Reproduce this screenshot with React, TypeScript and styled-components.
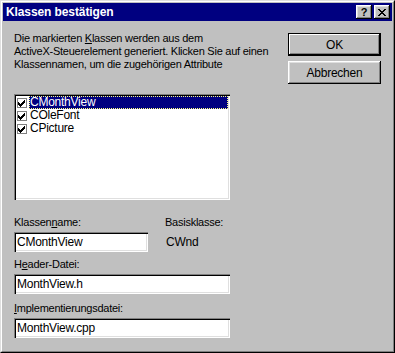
import React from "react";
import styled, { createGlobalStyle } from "styled-components";

const Global = createGlobalStyle`
  html, body { margin: 0; padding: 0; background: #c0c0c0; }
  body { font-family: "Liberation Sans", Arial, sans-serif; font-size: 11px; color: #000; letter-spacing: -0.25px; }
`;

const Window = styled.div`
  width: 395px;
  height: 353px;
  box-sizing: border-box;
  background: #c0c0c0;
  border-style: solid;
  border-width: 1px;
  border-color: #dfdfdf #000 #000 #dfdfdf;
  display: flex;
`;

const WindowInner = styled.div`
  flex: 1;
  display: flex;
  flex-direction: column;
  border-style: solid;
  border-width: 1px;
  border-color: #fff #808080 #808080 #fff;
  padding: 1px;
`;

const TitleBar = styled.div`
  height: 18px;
  background: #000080;
  display: flex;
  align-items: center;
  padding: 0 2px 0 3px;
`;

const Title = styled.span`
  flex: 1;
  color: #fff;
  font-weight: bold;
  font-size: 12px;
  line-height: 18px;
  letter-spacing: -0.1px;
`;

const CaptionButton = styled.div<{ $gap?: boolean }>`
  width: 16px;
  height: 14px;
  box-sizing: border-box;
  background: #c0c0c0;
  box-shadow: inset -1px -1px #000, inset 1px 1px #fff, inset -2px -2px #808080, inset 2px 2px #dfdfdf;
  display: flex;
  align-items: center;
  justify-content: center;
  margin-left: ${(p) => (p.$gap ? "2px" : "0")};
  font-weight: bold;
  font-size: 11px;
  line-height: 11px;
`;

const Body = styled.div`
  flex: 1;
  display: flex;
  justify-content: space-between;
  padding: 11px 11px 0 11px;
`;

const LeftColumn = styled.div`
  width: 216px;
  display: flex;
  flex-direction: column;
`;

const RightColumn = styled.div`
  width: 93px;
  display: flex;
  flex-direction: column;
  gap: 5px;
  padding-top: 1px;
`;

const Description = styled.p`
  margin: 0;
  line-height: 13px;
  white-space: nowrap;
`;

const ListBox = styled.div`
  margin-top: 23px;
  height: 106px;
  box-sizing: border-box;
  padding: 2px;
  background: #fff;
  box-shadow: inset 1px 1px #808080, inset 2px 2px #000, inset -1px -1px #fff, inset -2px -2px #dfdfdf;
  display: flex;
  flex-direction: column;
`;

const ListItem = styled.div`
  height: 13px;
  display: flex;
  align-items: center;
  padding-left: 1px;
`;

const CheckBox = styled.span`
  width: 10px;
  height: 10px;
  box-sizing: border-box;
  border: 1px solid #808080;
  background: #fff;
  display: flex;
  align-items: center;
  justify-content: center;
  flex: none;
`;

const ItemLabel = styled.span<{ $selected?: boolean }>`
  flex: 1;
  margin-left: 2px;
  height: 13px;
  line-height: 13px;
  padding-left: 1px;
  box-sizing: border-box;
  font-size: 12px;
  background: ${(p) => (p.$selected ? "#000080" : "transparent")};
  color: ${(p) => (p.$selected ? "#fff" : "#000")};
  outline: ${(p) => (p.$selected ? "1px dotted #ffff80" : "none")};
  outline-offset: -1px;
`;

const FieldsRow = styled.div`
  display: flex;
  margin-top: 16px;
`;

const FieldColumn = styled.div<{ $width?: number }>`
  display: flex;
  flex-direction: column;
  width: ${(p) => (p.$width ? `${p.$width}px` : "auto")};
`;

const Label = styled.div<{ $top?: number }>`
  line-height: 13px;
  margin-top: ${(p) => p.$top ?? 0}px;
  margin-bottom: 3px;
`;

const Edit = styled.div<{ $width?: number }>`
  height: 20px;
  width: ${(p) => (p.$width ? `${p.$width}px` : "100%")};
  box-sizing: border-box;
  background: #fff;
  box-shadow: inset 1px 1px #808080, inset 2px 2px #000, inset -1px -1px #fff, inset -2px -2px #dfdfdf;
  padding: 0 3px;
  line-height: 20px;
  font-size: 12px;
`;

const StaticValue = styled.div`
  line-height: 20px;
  padding-left: 1px;
  font-size: 12px;
`;

const Button = styled.div<{ $default?: boolean }>`
  height: 23px;
  box-sizing: border-box;
  background: #c0c0c0;
  display: flex;
  align-items: center;
  justify-content: center;
  font-size: 12px;
  box-shadow: ${(p) =>
    p.$default
      ? "inset 0 0 0 1px #000, inset -2px -2px #000, inset 2px 2px #fff, inset -3px -3px #808080"
      : "inset -1px -1px #000, inset 1px 1px #fff, inset -2px -2px #808080, inset 2px 2px #dfdfdf"};
`;

const Check = () => (
  <svg width="8" height="8" viewBox="0 0 8 8" shapeRendering="crispEdges">
    <path d="M0 3h1v1h1v1h1v-1h1v-1h1v-1h1v-1h1v3h-1v1h-1v1h-1v1h-1v1h-1v-1h-1v-1h-1z" fill="#000" />
  </svg>
);

const CloseGlyph = () => (
  <svg width="8" height="7" viewBox="0 0 8 7" shapeRendering="crispEdges">
    <path
      d="M0 0h2v1h1v1h2v-1h1v-1h2v1h-1v1h-1v1h-1v1h1v1h1v1h1v1h-2v-1h-1v-1h-2v1h-1v1h-2v-1h1v-1h1v-1h1v-1h-1v-1h-1v-1h-1z"
      fill="#000"
    />
  </svg>
);

const items = [
  { name: "CMonthView", selected: true },
  { name: "COleFont" },
  { name: "CPicture" },
];

export default function App() {
  return (
    <>
      <Global />
      <Window>
        <WindowInner>
          <TitleBar>
            <Title>Klassen bestätigen</Title>
            <CaptionButton>?</CaptionButton>
            <CaptionButton $gap>
              <CloseGlyph />
            </CaptionButton>
          </TitleBar>
          <Body>
            <LeftColumn>
              <Description>
                Die markierten <u>K</u>lassen werden aus dem
                <br />
                ActiveX-Steuerelement generiert. Klicken Sie auf einen
                <br />
                Klassennamen, um die zugehörigen Attribute
              </Description>
              <ListBox>
                {items.map((it) => (
                  <ListItem key={it.name}>
                    <CheckBox>
                      <Check />
                    </CheckBox>
                    <ItemLabel $selected={it.selected}>{it.name}</ItemLabel>
                  </ListItem>
                ))}
              </ListBox>
              <FieldsRow>
                <FieldColumn $width={151}>
                  <Label>
                    Klassen<u>n</u>ame:
                  </Label>
                  <Edit $width={134}>CMonthView</Edit>
                </FieldColumn>
                <FieldColumn>
                  <Label>Basisklasse:</Label>
                  <StaticValue>CWnd</StaticValue>
                </FieldColumn>
              </FieldsRow>
              <Label $top={6}>
                H<u>e</u>ader-Datei:
              </Label>
              <Edit>MonthView.h</Edit>
              <Label $top={8}>
                <u>I</u>mplementierungsdatei:
              </Label>
              <Edit>MonthView.cpp</Edit>
            </LeftColumn>
            <RightColumn>
              <Button $default>OK</Button>
              <Button>Abbrechen</Button>
            </RightColumn>
          </Body>
        </WindowInner>
      </Window>
    </>
  );
}
